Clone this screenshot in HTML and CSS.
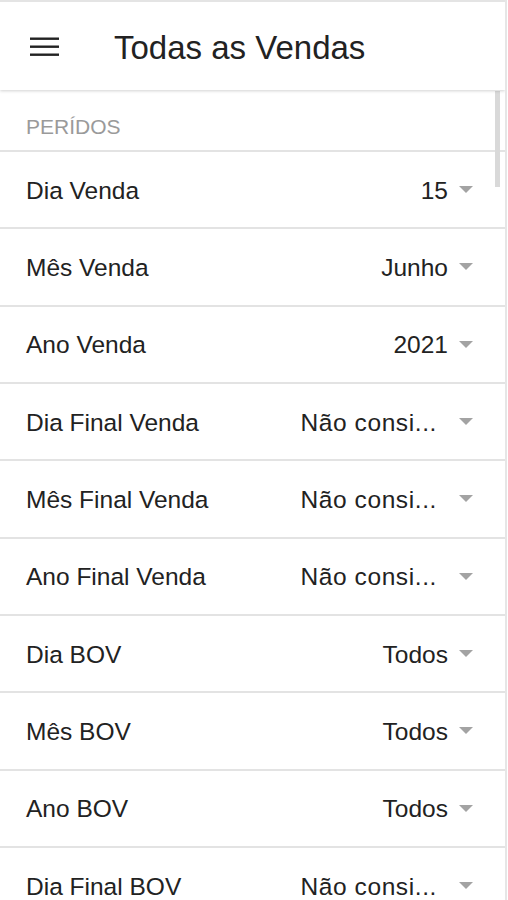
FILE: index.html
```html
<!DOCTYPE html>
<html lang="pt-BR">
<head>
    <meta charset="UTF-8">
    <meta name="viewport" content="width=device-width, initial-scale=1.0">
    <title>Todas as Vendas</title>
    <link rel="stylesheet" href="styles.css">
</head>
<body>

    <div class="screen">
        <header class="toolbar">
            <button class="menu-btn" type="button" aria-label="Menu">
                <svg width="29" height="19" viewBox="0 0 29 19">
                    <rect x="0" y="0.5" width="29" height="2.4" fill="#222"/>
                    <rect x="0" y="8.5" width="29" height="2.4" fill="#222"/>
                    <rect x="0" y="16.5" width="29" height="2.4" fill="#222"/>
                </svg>
            </button>
            <h1 class="title">Todas as Vendas</h1>
        </header>

        <div class="content">
            <div class="scrollbar"></div>

            <div class="list-header">PERÍDOS</div>

            <div class="item">
                <span class="label">Dia Venda</span>
                <span class="value">15</span>
                <span class="arrow"></span>
            </div>
            <div class="item">
                <span class="label">Mês Venda</span>
                <span class="value">Junho</span>
                <span class="arrow"></span>
            </div>
            <div class="item">
                <span class="label">Ano Venda</span>
                <span class="value">2021</span>
                <span class="arrow"></span>
            </div>
            <div class="item">
                <span class="label">Dia Final Venda</span>
                <span class="value short">Não consi...</span>
                <span class="arrow"></span>
            </div>
            <div class="item">
                <span class="label">Mês Final Venda</span>
                <span class="value short">Não consi...</span>
                <span class="arrow"></span>
            </div>
            <div class="item">
                <span class="label">Ano Final Venda</span>
                <span class="value short">Não consi...</span>
                <span class="arrow"></span>
            </div>
            <div class="item">
                <span class="label">Dia BOV</span>
                <span class="value">Todos</span>
                <span class="arrow"></span>
            </div>
            <div class="item">
                <span class="label">Mês BOV</span>
                <span class="value">Todos</span>
                <span class="arrow"></span>
            </div>
            <div class="item">
                <span class="label">Ano BOV</span>
                <span class="value">Todos</span>
                <span class="arrow"></span>
            </div>
            <div class="item">
                <span class="label">Dia Final BOV</span>
                <span class="value short">Não consi...</span>
                <span class="arrow"></span>
            </div>
        </div>
    </div>

</body>
</html>
```

FILE: styles.css
```css
html, body {
    margin: 0;
    padding: 0;
    background: #fff;
}
body {
    font-family: "Liberation Sans", Arial, Helvetica, sans-serif;
    color: #222;
}
.screen {
    width: 505px;
    height: 100vh;
    overflow: hidden;
    border-right: 2px solid #e6e6e6;
    display: flex;
    flex-direction: column;
}
.toolbar {
    position: relative;
    z-index: 2;
    flex: none;
    height: 88px;
    border-top: 2px solid #e4e4e4;
    display: flex;
    align-items: center;
    padding-left: 30px;
    background: #fff;
    box-shadow: 0 1px 3px rgba(0, 0, 0, 0.18);
}
.menu-btn {
    border: none;
    background: none;
    padding: 0;
    margin: 0 55px 0 0;
    display: flex;
    cursor: pointer;
}
.title {
    margin: 0;
    font-size: 33px;
    font-weight: normal;
    color: #222;
    line-height: 1;
    padding-top: 2px;
}
.content {
    position: relative;
    flex: 1;
    overflow: hidden;
}
.scrollbar {
    position: absolute;
    top: 1px;
    right: 5px;
    width: 5px;
    height: 96px;
    background: #d9d9d9;
}
.list-header {
    height: 60px;
    box-sizing: border-box;
    padding: 25.5px 26px 0;
    font-size: 21px;
    line-height: 21px;
    color: #9a9a9a;
}
.item {
    height: 77.33px;
    box-sizing: border-box;
    border-top: 2px solid #e3e3e3;
    display: flex;
    align-items: center;
    padding: 2px 32px 0 26px;
    font-size: 24.5px;
}
.label {
    flex: 1;
    white-space: nowrap;
}
.value {
    white-space: nowrap;
}
.value.short {
    letter-spacing: 0.6px;
    margin-right: 11px;
}
.arrow {
    width: 0;
    height: 0;
    margin-left: 11px;
    margin-top: -2px;
    border-top: 7px solid #a3a3a3;
    border-left: 7px solid transparent;
    border-right: 7px solid transparent;
}
```
